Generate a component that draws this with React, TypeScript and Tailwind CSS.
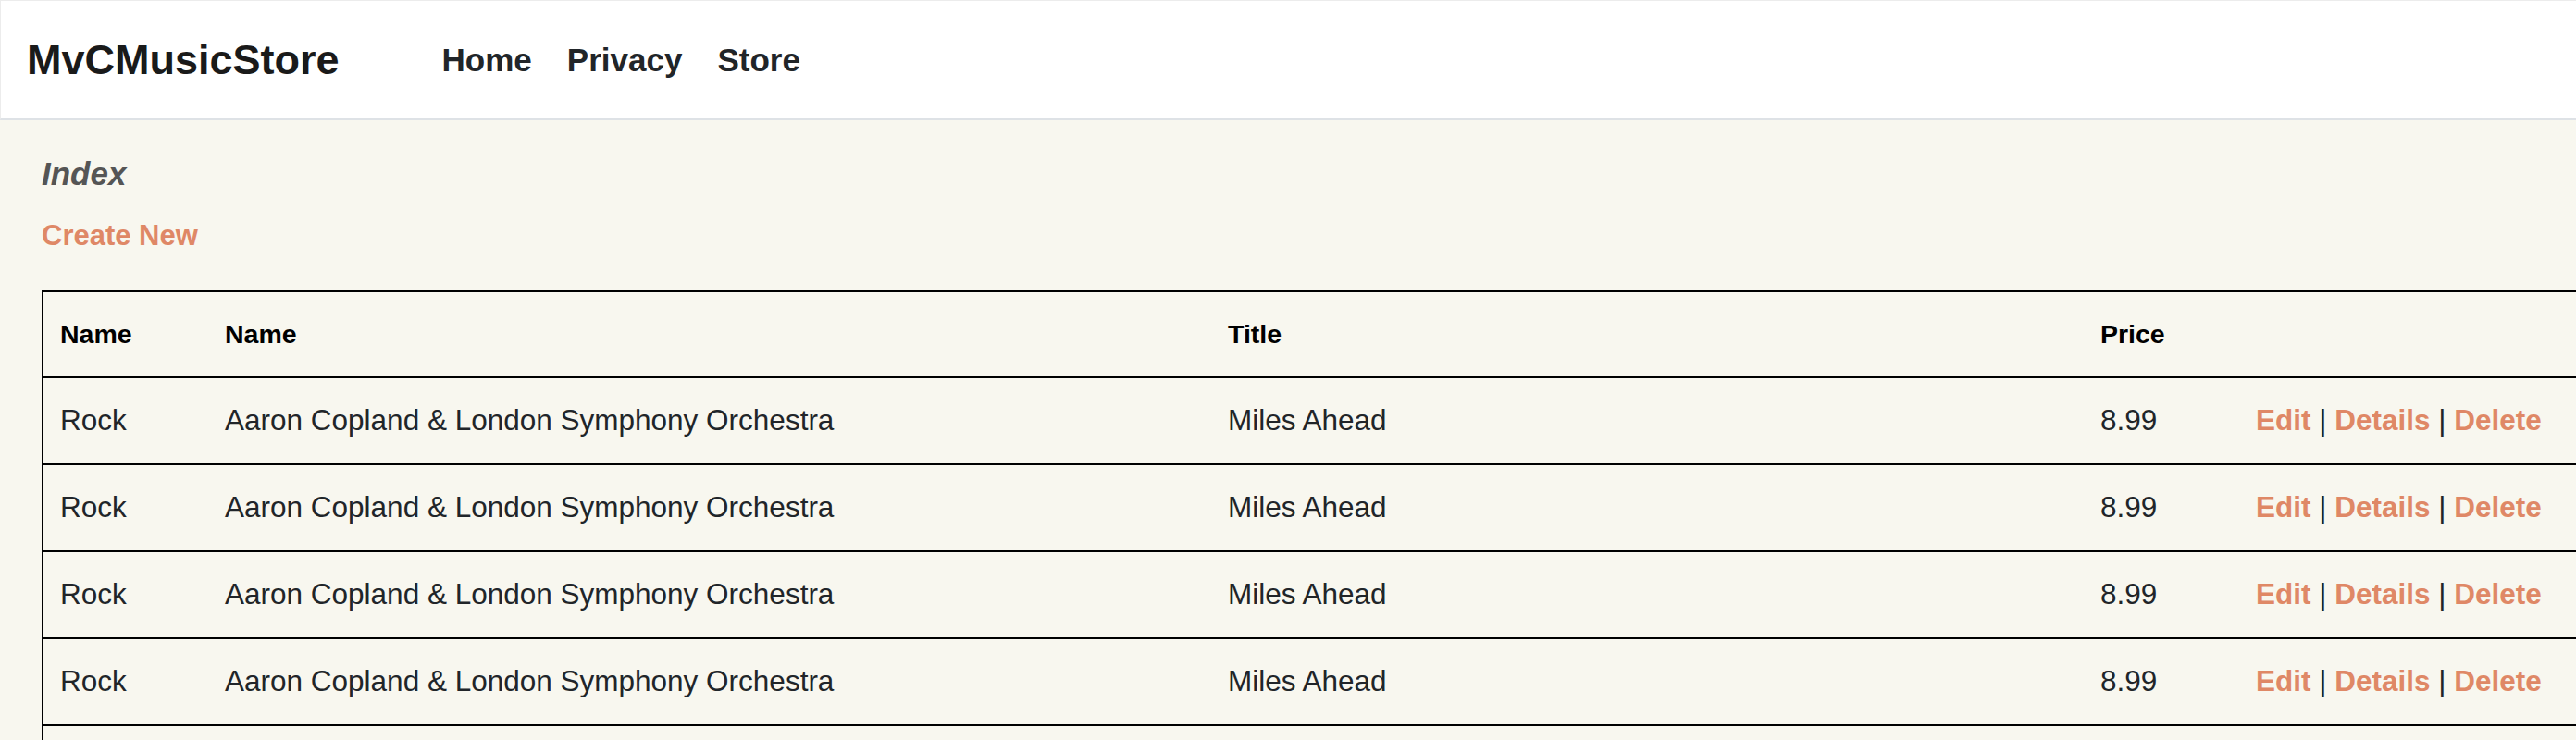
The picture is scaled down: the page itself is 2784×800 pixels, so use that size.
import React from "react";

const rows = Array.from({ length: 5 }, () => ({
  genre: "Rock",
  artist: "Aaron Copland & London Symphony Orchestra",
  title: "Miles Ahead",
  price: "8.99",
}));

const colW = ["w-[178px]", "w-[1084px]", "w-[943px]", "w-[168px]", "w-[400px]"];

export default function App() {
  return (
    <div
      className="w-full h-[800px] overflow-hidden bg-[#f8f7ef] text-[#212529]"
      style={{ fontFamily: '"Liberation Sans", Arial, sans-serif' }}
    >
      <nav className="h-[130px] bg-white border-t border-l border-[#ececec] border-b-2 border-b-[#dee2e6] flex items-center pl-[28px]">
        <span className="text-[45px] font-bold leading-none text-[#1a1a1a]">MvCMusicStore</span>
        <div className="ml-[111px] flex items-center gap-[38px] text-[35px] font-bold leading-none text-[#212529]">
          <span>Home</span>
          <span>Privacy</span>
          <span>Store</span>
        </div>
      </nav>

      <main className="pl-[45px]">
        <h2 className="mt-[40px] text-[35px] font-bold italic leading-none text-[#555555]">Index</h2>
        <p className="mt-[34px] text-[31px] font-bold leading-none text-[#df8866]">Create New</p>

        <div className="mt-[44px] w-[2800px] border-t-2 border-l-2 border-black">
          <div className="flex h-[93px] items-center border-b-2 border-black text-[28.5px] font-bold leading-none text-black">
            <div className={`${colW[0]} pl-[18px]`}>Name</div>
            <div className={`${colW[1]} pl-[18px]`}>Name</div>
            <div className={`${colW[2]} pl-[18px]`}>Title</div>
            <div className={`${colW[3]} pl-[18px]`}>Price</div>
            <div className={`${colW[4]} pl-[18px]`}></div>
          </div>
          {rows.map((r, i) => (
            <div
              key={i}
              className="flex h-[94px] items-center border-b-2 border-black text-[31.5px] leading-none"
            >
              <div className={`${colW[0]} pl-[18px]`}>{r.genre}</div>
              <div className={`${colW[1]} pl-[18px]`}>{r.artist}</div>
              <div className={`${colW[2]} pl-[18px]`}>{r.title}</div>
              <div className={`${colW[3]} pl-[18px]`}>{r.price}</div>
              <div className={`${colW[4]} pl-[18px] whitespace-nowrap`}>
                <span className="font-bold text-[#df8866]">Edit</span> |{" "}
                <span className="font-bold text-[#df8866]">Details</span> |{" "}
                <span className="font-bold text-[#df8866]">Delete</span>
              </div>
            </div>
          ))}
        </div>
      </main>
    </div>
  );
}
